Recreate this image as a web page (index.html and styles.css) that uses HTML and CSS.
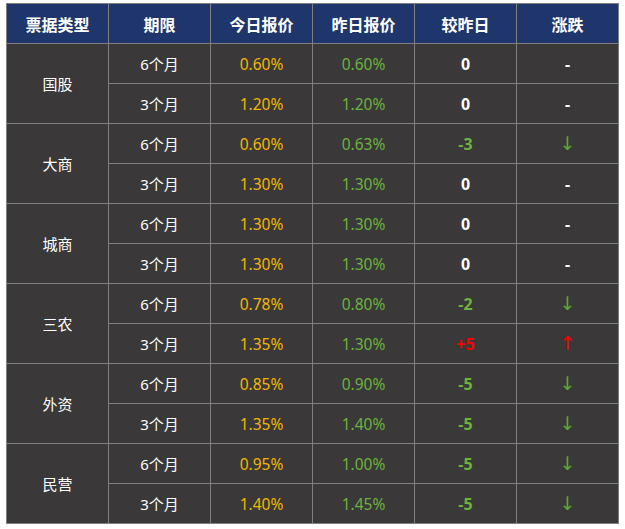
FILE: index.html
```html
<!DOCTYPE html>
<html lang="zh">
<head>
<meta charset="utf-8">
<link rel="stylesheet" href="styles.css">
</head>
<body>
<table class="quote">
  <thead>
    <tr><th>票据类型</th><th>期限</th><th>今日报价</th><th>昨日报价</th><th>较昨日</th><th>涨跌</th></tr>
  </thead>
  <tbody>
    <tr><td class="type" rowspan="2">国股</td><td>6个月</td><td class="today">0.60%</td><td class="yest">0.60%</td><td class="diff">0</td><td class="trend">-</td></tr>
    <tr><td>3个月</td><td class="today">1.20%</td><td class="yest">1.20%</td><td class="diff">0</td><td class="trend">-</td></tr>
    <tr><td class="type" rowspan="2">大商</td><td>6个月</td><td class="today">0.60%</td><td class="yest">0.63%</td><td class="diff down">-3</td><td class="trend down"><span class="arrow">↓</span></td></tr>
    <tr><td>3个月</td><td class="today">1.30%</td><td class="yest">1.30%</td><td class="diff">0</td><td class="trend">-</td></tr>
    <tr><td class="type" rowspan="2">城商</td><td>6个月</td><td class="today">1.30%</td><td class="yest">1.30%</td><td class="diff">0</td><td class="trend">-</td></tr>
    <tr><td>3个月</td><td class="today">1.30%</td><td class="yest">1.30%</td><td class="diff">0</td><td class="trend">-</td></tr>
    <tr><td class="type" rowspan="2">三农</td><td>6个月</td><td class="today">0.78%</td><td class="yest">0.80%</td><td class="diff down">-2</td><td class="trend down"><span class="arrow">↓</span></td></tr>
    <tr><td>3个月</td><td class="today">1.35%</td><td class="yest">1.30%</td><td class="diff up">+5</td><td class="trend up"><span class="arrow">↑</span></td></tr>
    <tr><td class="type" rowspan="2">外资</td><td>6个月</td><td class="today">0.85%</td><td class="yest">0.90%</td><td class="diff down">-5</td><td class="trend down"><span class="arrow">↓</span></td></tr>
    <tr><td>3个月</td><td class="today">1.35%</td><td class="yest">1.40%</td><td class="diff down">-5</td><td class="trend down"><span class="arrow">↓</span></td></tr>
    <tr><td class="type" rowspan="2">民营</td><td>6个月</td><td class="today">0.95%</td><td class="yest">1.00%</td><td class="diff down">-5</td><td class="trend down"><span class="arrow">↓</span></td></tr>
    <tr><td>3个月</td><td class="today">1.40%</td><td class="yest">1.45%</td><td class="diff down">-5</td><td class="trend down"><span class="arrow">↓</span></td></tr>
  </tbody>
</table>
</body>
</html>
```
FILE: styles.css
```css
html, body {
  margin: 0;
  padding: 0;
  background: #ffffff;
}
body {
  padding: 3px 0 0 6px;
  font-family: "Noto Sans", "Noto Sans CJK SC", sans-serif;
}
.quote {
  border-collapse: collapse;
  width: 613px;
  table-layout: fixed;
  font-size: 15px;
}
.quote th, .quote td {
  border: 1px solid #808080;
  text-align: center;
  vertical-align: middle;
  padding: 0;
  height: 40px;
  box-sizing: border-box;
}
.quote th {
  background: #1e366b;
  color: #ffffff;
  font-weight: bold;
  font-size: 16px;
}
.quote td {
  background: #3a3838;
  color: #ffffff;
}
.quote .today, .quote .yest { font-size: 15.5px; }
.quote .today { color: #f2b700; }
.quote .yest { color: #6db33f; }
.quote .diff { font-weight: bold; color: #ffffff; font-size: 16px; }
.quote .diff.down { color: #6db33f; }
.quote .diff.up { color: #ff0000; }
.quote .trend { font-weight: bold; font-size: 16px; }
.quote .trend.down { color: #5aa63a; font-weight: normal; }
.quote .trend.up { color: #ff0000; font-weight: normal; }
.arrow {
  font-family: "DejaVu Sans", sans-serif;
  font-size: 19px;
}
```
